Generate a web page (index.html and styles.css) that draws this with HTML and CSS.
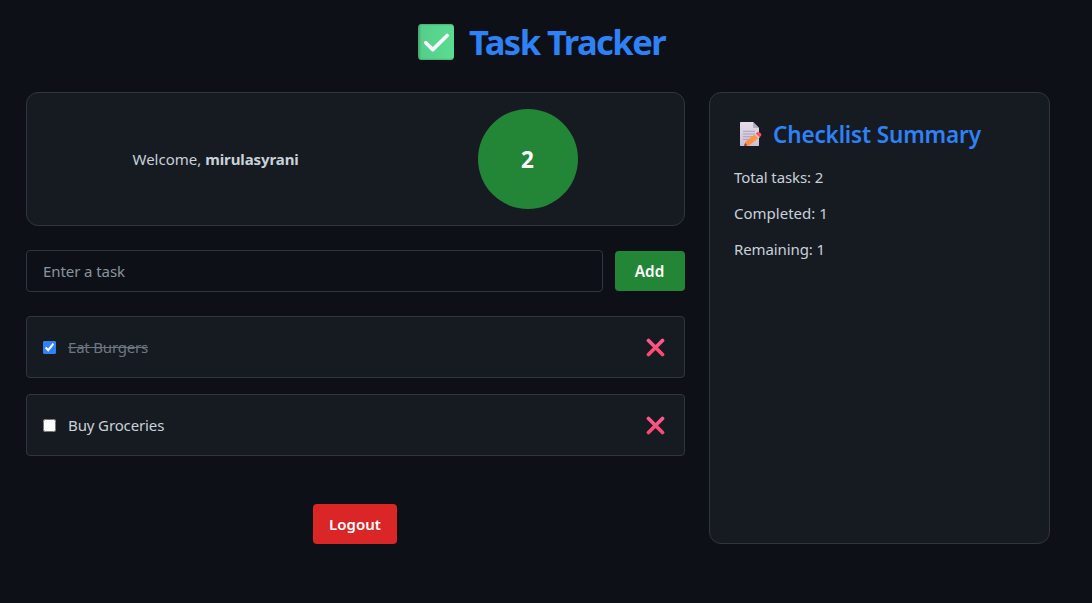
FILE: index.html
```html
<!DOCTYPE html>
<html lang="en">
<head>
<meta charset="utf-8">
<title>Task Tracker</title>
<link rel="stylesheet" href="styles.css">
</head>
<body>
<div class="app">
  <h1 class="title">
    <svg class="title-icon" viewBox="0 0 36 36"><defs><linearGradient id="tile" x1="0" x2="1"><stop offset="0" stop-color="#43a56d"/><stop offset=".1" stop-color="#55cf8b"/><stop offset="1" stop-color="#5bdc92"/></linearGradient><linearGradient id="shade" x1="0" y1="0" x2="0" y2="1"><stop offset="0" stop-color="#3fa069" stop-opacity=".8"/><stop offset=".07" stop-color="#55cf8b" stop-opacity="0"/><stop offset=".93" stop-color="#55cf8b" stop-opacity="0"/><stop offset="1" stop-color="#3fa069" stop-opacity=".8"/></linearGradient></defs><rect width="36" height="36" rx="4" fill="url(#tile)"/><rect width="36" height="36" rx="4" fill="url(#shade)"/><path d="M7.700 18.600l7.100 7L29.200 11.500" fill="none" stroke="#f8f3fc" stroke-width="3.700" stroke-linecap="round" stroke-linejoin="round"/></svg>
    <span class="title-text">Task Tracker</span>
  </h1>
  <main class="columns">
    <section class="main-column">
      <div class="welcome card">
        <p class="greeting"><span class="hello">Welcome,</span> <strong class="user">mirulasyrani</strong></p>
        <div class="count"><span>2</span></div>
      </div>
      <form class="add-form">
        <input class="task-input" type="text" placeholder="Enter a task">
        <button class="button add" type="button">Add</button>
      </form>
      <ul class="tasks">
        <li class="task done">
          <input class="check" type="checkbox" checked>
          <span class="task-name">Eat Burgers</span>
          <svg class="remove" viewBox="0 0 20 20"><defs><linearGradient id="cross" x1="0" y1="0" x2="0" y2="20" gradientUnits="userSpaceOnUse"><stop stop-color="#ff5c93"/><stop offset="1" stop-color="#f8476b"/></linearGradient></defs><path d="M2.500 3.500l14 14M16.500 3.500l-14 14" stroke="url(#cross)" stroke-width="3.700" stroke-linecap="round"/></svg>
        </li>
        <li class="task">
          <input class="check" type="checkbox">
          <span class="task-name">Buy Groceries</span>
          <svg class="remove" viewBox="0 0 20 20"><path d="M2.500 3.500l14 14M16.500 3.500l-14 14" stroke="url(#cross)" stroke-width="3.700" stroke-linecap="round"/></svg>
        </li>
      </ul>
      <button class="button logout" type="button">Logout</button>
    </section>
    <aside class="summary card">
      <h2 class="summary-title">
        <svg class="note" viewBox="0 0 24 26"><defs><linearGradient id="page" x2="0" y2="1"><stop stop-color="#e4dcec"/><stop offset="1" stop-color="#cbc1d6"/></linearGradient><linearGradient id="pencil"><stop stop-color="#ff8a35"/><stop offset="1" stop-color="#ff9a50"/></linearGradient></defs><path d="M1 .4Q1 0 1.400 0H14l6 6v17.600q0 .4-.4.4H1.400Q1 24 1 23.600z" fill="url(#page)"/><path d="M14 0v5q0 1 1 1h5z" fill="#b6a9c4"/><path d="M4 9.300h12M4 12h12M4 14.700h10M4 17.400h7" stroke="#a69bb2" stroke-width=".9"/><path d="M5.300 23.500l1.200-3.700L16.500 11.800l3.800 3.800L10 23.600z" fill="url(#pencil)"/><path d="M5 24l1.100-2.900 2.200 2.500z" fill="#704355"/><path d="M15.600 12.500l1.700-1.400 3.900 3.800-1.800 1.400z" fill="#d9cfe2"/><path d="M16.800 11.500l1.600-1.200q1.200-.9 2.600.4l.9.900q1.200 1.400 0 2.500l-1.500 1.200z" fill="#f8515d"/></svg>
        <span class="summary-heading">Checklist Summary</span>
      </h2>
      <p class="stat total">Total tasks: 2</p>
      <p class="stat">Completed: 1</p>
      <p class="stat remaining">Remaining: 1</p>
    </aside>
  </main>
</div>
</body>
</html>
```
FILE: styles.css
```css
* { box-sizing: border-box; }
body { margin: 0; background: #0d1117; color: #c9d1d9; font: 15px/24px "Noto Sans", sans-serif; }
.app { width: 1024px; margin-left: 26px; padding-top: 16px; }
h1, h2, p, ul { margin: 0; padding: 0; }
.title { display: flex; height: 52px; margin-bottom: 24px; padding-left: 392px; gap: 15px; align-items: center; color: #2f81f7; font-size: 34.500px; line-height: 52px; font-weight: 700; white-space: nowrap; }
.title-icon { width: 36px; height: 36px; flex: none; }
.title-text { letter-spacing: -1.500px; }
.columns { display: grid; grid-template-columns: 659px 341px; gap: 24px; }
.main-column { display: flex; flex-direction: column; }
.card { background: #161b22; border: 1px solid #30363d; border-radius: 12px; }
.welcome { display: flex; height: 134px; align-items: center; justify-content: space-around; padding: 16px 17px 16px 16px; margin-bottom: 24px; }
.greeting { width: 166px; white-space: nowrap; }
.user { letter-spacing: -.1px; }
.count { display: flex; width: 100px; height: 100px; border-radius: 50%; align-items: center; justify-content: center; background: #238636; color: #fff; font-size: 22.500px; font-weight: 700; padding-top: 2px; }
.add-form { display: flex; align-items: center; gap: 12px; margin-bottom: 24px; }
.task-input { flex: 1; min-width: 0; height: 42px; padding: 0 16px; border: 1px solid #30363d; border-radius: 4px; background: #0d1117; color: #c9d1d9; font: inherit; }
.task-input::placeholder { color: #8b949e; opacity: 1; letter-spacing: -.08px; }
.button { height: 40px; padding: 0; border: 0; border-radius: 4px; color: #fff; font: 600 15px/24px "Noto Sans", sans-serif; }
.add { width: 70px; padding-right: 1px; font-size: 15.300px; }
.add { background: #238636; }
.tasks { display: grid; gap: 16px; list-style: none; }
.task { display: flex; height: 62px; align-items: center; padding: 0 18px 0 16px; border: 1px solid #30363d; border-radius: 4px; background: #161b22; }
.check { width: 13px; height: 13px; margin: 0 12px 0 0; accent-color: #2f81f7; }
.task-name { flex: 1; letter-spacing: -.12px; }
.done .task-name { color: #6e7681; text-decoration: line-through; letter-spacing: -.2px; }
.remove { width: 20px; height: 20px; flex: none; }
.logout { width: 84px; margin: 48px 0 0 287px; background: #da2626; }
.summary { padding: 24px; }
.summary-title { display: flex; height: 36px; align-items: center; gap: 10px; padding-left: 5px; margin-bottom: 12px; color: #2f81f7; font-size: 22.500px; font-weight: 600; white-space: nowrap; }
.summary-heading { letter-spacing: -.15px; }
.note { width: 24px; height: 26px; flex: none; }
.stat { margin-bottom: 12px; }
.total, .remaining { letter-spacing: -.1px; }
```
